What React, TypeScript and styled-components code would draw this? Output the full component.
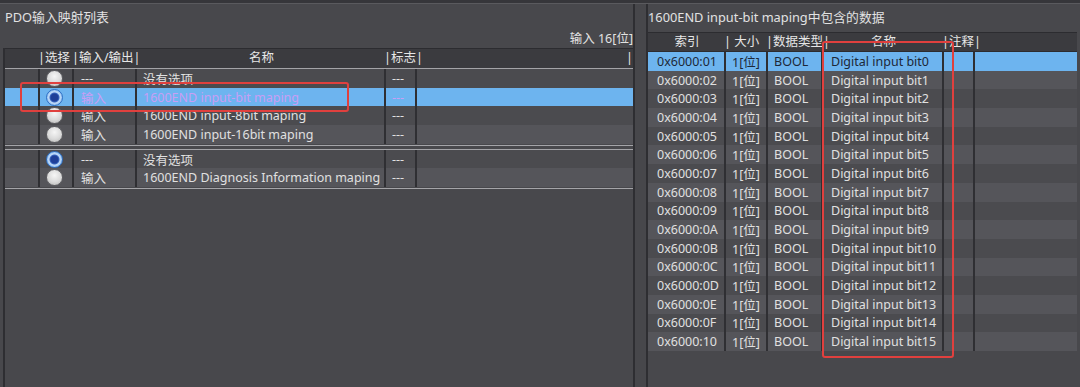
import styled, { createGlobalStyle } from "styled-components";

const GlobalStyle = createGlobalStyle`
  body {
    margin: 0;
    background: #48484c;
    font-family: "Noto Sans", "Noto Sans CJK SC", sans-serif;
  }
`;

const leftEntries = [
  { group: 0, io: "---", name: "没有选项", flag: "---", checked: false, selected: false },
  { group: 0, io: "输入", name: "1600END input-bit maping", flag: "---", checked: true, selected: true },
  { group: 0, io: "输入", name: "1600END input-8bit maping", flag: "---", checked: false, selected: false },
  { group: 0, io: "输入", name: "1600END input-16bit maping", flag: "---", checked: false, selected: false },
  { group: 1, io: "---", name: "没有选项", flag: "---", checked: true, selected: false },
  { group: 1, io: "输入", name: "1600END Diagnosis Information maping", flag: "---", checked: false, selected: false },
];

const hex = ["01", "02", "03", "04", "05", "06", "07", "08", "09", "0A", "0B", "0C", "0D", "0E", "0F", "10"];
const bits = hex.map((h, i) => ({
  index: "0x6000:" + h,
  size: "1[位]",
  type: "BOOL",
  name: "Digital input bit" + i,
}));

const LEFT_COLS = "35px 34px 63px 249px 31px 1fr";
const RIGHT_COLS = "78px 42px 55px 121px 31px 1fr";

export default function App() {
  const group0 = leftEntries.filter((e) => e.group === 0);
  const group1 = leftEntries.filter((e) => e.group === 1);

  return (
    <Page>
      <GlobalStyle />
      <TopStrip />
      <Panels>
        <LeftPanel>
          <Title $indent={5}>PDO输入映射列表</Title>
          <Caption>输入 16[位]</Caption>
          <LeftTable>
            <HeaderRow $cols={LEFT_COLS}>
              <Head />
              <Head $align="left">|选择</Head>
              <Head $align="left">|输入/输出|</Head>
              <Head>名称</Head>
              <Head $align="left">|标志|</Head>
              <Head $align="right">|</Head>
            </HeaderRow>
            {group0.map((e, i) => (
              <LeftRow key={i} entry={e} alt={i % 2 === 1} />
            ))}
            <GroupSplit />
            {group1.map((e, i) => (
              <LeftRow key={"g" + i} entry={e} alt={i % 2 === 1} />
            ))}
            <EndLine />
          </LeftTable>
        </LeftPanel>
        <Divider />
        <RightPanel>
          <Title $indent={0}>1600END input-bit maping中包含的数据</Title>
          <RightTable>
            <HeaderRow $cols={RIGHT_COLS} $short>
              <Head>索引</Head>
              <Head $align="left">| 大小</Head>
              <Head $align="left">|数据类型|</Head>
              <Head>名称</Head>
              <Head $align="left">|注释|</Head>
              <Head />
            </HeaderRow>
            {bits.map((b, i) => (
              <Row key={b.index} $cols={RIGHT_COLS} $alt={i % 2 === 1} $selected={i === 0} $tone="dark">
                <Cell $pad={9}>{b.index}</Cell>
                <Cell $pad={6}>{b.size}</Cell>
                <Cell $pad={6}>{b.type}</Cell>
                <Cell $pad={8}>{b.name}</Cell>
                <Cell />
                <Cell $last />
              </Row>
            ))}
          </RightTable>
        </RightPanel>
      </Panels>
      <Mark style={{ left: 20, top: 82, width: 329, height: 30 }} />
      <Mark style={{ left: 822, top: 41, width: 132, height: 317 }} />
    </Page>
  );
}

function LeftRow({ entry, alt }: { entry: (typeof leftEntries)[number]; alt: boolean }) {
  return (
    <Row $cols={LEFT_COLS} $alt={alt} $selected={entry.selected} $tone="violet">
      <Cell />
      <Cell $center>
        <Radio $checked={entry.checked} />
      </Cell>
      <Cell $pad={7}>{entry.io}</Cell>
      <Cell $pad={6}>{entry.name}</Cell>
      <Cell $pad={6}>{entry.flag}</Cell>
      <Cell $last />
    </Row>
  );
}

const Page = styled.div`
  position: relative;
  width: 1080px;
  height: 387px;
  overflow: hidden;
  display: flex;
  flex-direction: column;
  background: #48484c;
  color: #dcdcdc;
  font-size: 13px;
`;

const TopStrip = styled.div`
  height: 3px;
  background: #36363a;
  border-bottom: 1px solid #5a5a5e;
  flex: none;
`;

const Panels = styled.div`
  flex: 1;
  display: flex;
  min-height: 0;
`;

const LeftPanel = styled.section`
  width: 633px;
  display: flex;
  flex-direction: column;
`;

const Divider = styled.div`
  width: 11px;
  border-left: 2px solid #2e2e32;
  border-right: 2px solid #2e2e32;
  background: #47474b;
`;

const RightPanel = styled.section`
  flex: 1;
  display: flex;
  flex-direction: column;
  padding-right: 3px;
`;

const Title = styled.div<{ $indent: number }>`
  height: 26px;
  line-height: 27px;
  padding-left: ${(p) => p.$indent}px;
  font-size: 12.8px;
  color: #e2e2e2;
  white-space: nowrap;
  flex: none;
`;

const Caption = styled.div`
  height: 18px;
  line-height: 18px;
  text-align: right;
  font-size: 12.5px;
  color: #e2e2e2;
  flex: none;
`;

const LeftTable = styled.div`
  flex: 1;
  margin-left: 3px;
  border-left: 2px solid #2e2e32;
  display: flex;
  flex-direction: column;
`;

const RightTable = styled.div`
  flex: 1;
  margin-top: 2px;
  display: flex;
  flex-direction: column;
`;

const HeaderRow = styled.div<{ $cols: string; $short?: boolean }>`
  display: grid;
  grid-template-columns: ${(p) => p.$cols};
  height: ${(p) => (p.$short ? 18 : 19)}px;
  background: #3b3b3f;
  border-top: 1px solid #2c2c30;
  border-bottom: 1px solid ${(p) => (p.$short ? "#2c2c30" : "#a4a4a8")};
  flex: none;
`;

const Head = styled.div<{ $align?: "left" | "center" | "right" }>`
  line-height: 18px;
  font-size: 12.5px;
  color: #e6e6e6;
  white-space: nowrap;
  text-align: ${(p) => p.$align ?? "center"};
  margin-left: ${(p) => (p.$align === "left" ? -2 : 0)}px;
`;

const Row = styled.div<{ $cols: string; $alt: boolean; $selected: boolean; $tone: "violet" | "dark" }>`
  display: grid;
  grid-template-columns: ${(p) => p.$cols};
  height: 18.7px;
  flex: none;
  background: ${(p) => (p.$selected ? "#6db4ef" : p.$alt ? "#55555a" : "#4b4b4f")};
  color: ${(p) => (p.$selected ? (p.$tone === "violet" ? "#c89ef4" : "#1d2838") : "#e0e0e0")};
`;

const Cell = styled.div<{ $pad?: number; $center?: boolean; $last?: boolean }>`
  display: flex;
  align-items: center;
  justify-content: ${(p) => (p.$center ? "center" : "flex-start")};
  padding-left: ${(p) => p.$pad ?? 0}px;
  border-right: ${(p) => (p.$last ? "none" : "2px solid #2f2f33")};
  white-space: nowrap;
  overflow: ${(p) => (p.$center ? "visible" : "hidden")};
  font-size: 12.5px;
`;

const Radio = styled.span<{ $checked: boolean }>`
  display: block;
  flex: none;
  width: 17px;
  height: 17px;
  border-radius: 50%;
  box-sizing: border-box;
  border: 1px solid ${(p) => (p.$checked ? "#2f6fc4" : "#606064")};
  background: ${(p) =>
    p.$checked
      ? "radial-gradient(circle, #1f3f98 0 3.5px, #3a68c0 4.5px, #c4dcf8 5.5px, #8cbff2 8px)"
      : "radial-gradient(circle at 50% 35%, #f6f6f6 0, #dadada 55%, #b2b2b2 100%)"};
  margin-right: 3px;
  position: relative;
  z-index: 1;
`;

const GroupSplit = styled.div`
  height: 3px;
  margin-top: 1px;
  border-top: 1px solid #a4a4a8;
  border-bottom: 1px solid #a4a4a8;
  flex: none;
`;

const EndLine = styled.div`
  height: 0;
  border-top: 1px solid #a4a4a8;
  margin-top: 1px;
  flex: none;
`;

const Mark = styled.div`
  position: absolute;
  box-sizing: border-box;
  border: 2px solid #e0403e;
  border-radius: 3px;
  pointer-events: none;
  z-index: 2;
`;
